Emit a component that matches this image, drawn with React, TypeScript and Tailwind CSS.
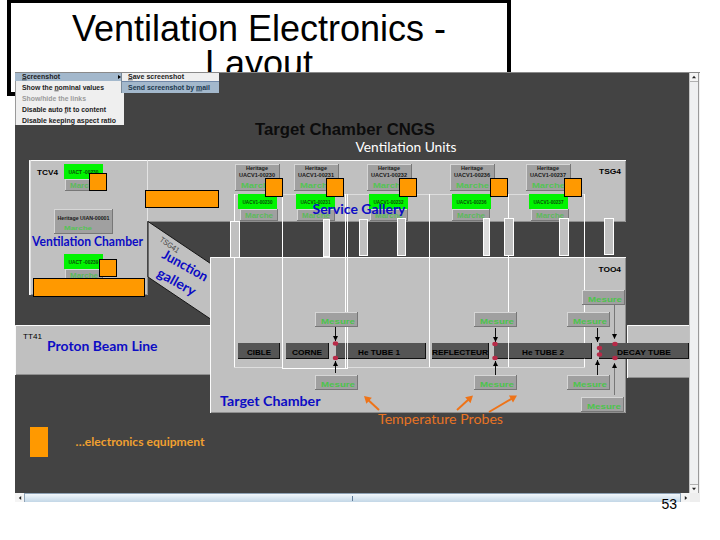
import type { ReactNode } from 'react';
import clsx from 'clsx';

interface Box {
  x: number;
  y: number;
  w: number;
  h: number;
}

interface LabelProps {
  x: number;
  y: number;
  w: number;
  className?: string;
  children: string;
  rotate?: number;
}

const CALIBRI = "font-['Lato','Open_Sans',sans-serif]";
const ARIAL = "font-['Liberation_Sans',Arial,sans-serif]";

const UNITS = [
  { id: 'UACV1-00230', box: 235, fan: 238, base: 240, marker: 265 },
  { id: 'UACV1-00231', box: 294, fan: 296, base: 297, marker: 326 },
  { id: 'UACV1-00232', box: 367, fan: 369, base: 370, marker: 399 },
  { id: 'UACV1-00236', box: 450, fan: 452, base: 452, marker: 490 },
  { id: 'UACV1-00237', box: 526, fan: 529, base: 531, marker: 564 },
];

const DUCTS: Box[] = [
  { x: 230, y: 221, w: 10, h: 37 },
  { x: 323, y: 219, w: 7, h: 38 },
  { x: 359, y: 219, w: 9, h: 37 },
  { x: 397, y: 218, w: 9, h: 38 },
  { x: 483, y: 218, w: 7, h: 38 },
  { x: 504, y: 218, w: 10, h: 38 },
  { x: 559, y: 218, w: 10, h: 38 },
  { x: 604, y: 218, w: 10, h: 37 },
];

const BEAM_PARTS = [
  { name: 'CIBLE', x: 238, w: 42, tx: 247, tw: 24 },
  { name: 'CORNE', x: 286, w: 43, tx: 292, tw: 30 },
  { name: 'He TUBE 1', x: 336, w: 90, tx: 358, tw: 42 },
  { name: 'REFLECTEUR', x: 432, w: 57, tx: 432, tw: 56 },
  { name: 'He TUBE 2', x: 494, w: 98, tx: 522, tw: 42 },
  { name: 'DECAY TUBE', x: 599, w: 90, tx: 617, tw: 54 },
];

const PROBES = [
  [315, 312],
  [315, 375],
  [474, 312],
  [474, 375],
  [567, 312],
  [567, 375],
  [582, 290],
  [581, 397],
];

const SENSORS = [
  [335.5, 343.5],
  [335.5, 358],
  [495, 344],
  [495, 358],
  [599.5, 348],
  [599.5, 354.5],
  [615, 344],
  [615, 358],
];

// x, y of the tail, y of the tip
const PROBE_ARROWS = [
  [335.5, 327, 341],
  [335.5, 373, 361],
  [495.5, 328, 342],
  [495.5, 375, 361],
  [597.5, 328, 342],
  [597.5, 375, 360],
  [614.5, 305, 339],
  [614.5, 395, 363],
];

function Label({ x, y, w, className, children, rotate }: LabelProps) {
  return (
    <text
      x={x}
      y={y}
      textLength={w}
      lengthAdjust="spacingAndGlyphs"
      transform={rotate ? `rotate(${rotate} ${x} ${y})` : undefined}
      className={className}
    >
      {children}
    </text>
  );
}

function Panel({ x, y, w, h }: Box) {
  return (
    <g>
      <rect x={x} y={y} width={w} height={h} className="fill-[#777777]" />
      <rect x={x} y={y} width={w - 1} height={h - 1} className="fill-[#d6d6d6]" />
      <rect x={x + 1} y={y + 1} width={w - 2} height={h - 2} className="fill-[#a0a0a0]" />
    </g>
  );
}

function Room({ x, y, w, h }: Box) {
  return (
    <g>
      <rect x={x} y={y} width={w} height={h} className="fill-[#c0c0c0]" />
      <path d={`M${x + w - 0.5} ${y}V${y + h - 0.5}H${x}`} className="fill-none stroke-[#8e8e8e]" />
      <path d={`M${x + 0.5} ${y + h}V${y + 0.5}H${x + w}`} className="fill-none stroke-[#fafafa]" />
    </g>
  );
}

function Equipment({ x, y, w, h }: Box) {
  return (
    <rect x={x + 0.5} y={y + 0.5} width={w - 1} height={h - 1} className="fill-[#ff9900] stroke-black" />
  );
}

function Fan({ x, y, baseX, baseH, id }: { x: number; y: number; baseX: number; baseH: number; id: string }) {
  return (
    <g>
      <Panel x={baseX} y={y + 15} w={38} h={baseH} />
      <Label x={baseX + 5} y={y + 23.5} w={28} className={`${ARIAL} fill-[#5cba5c] text-[7px] font-bold`}>
        Marche
      </Label>
      <rect x={x} y={y} width={39} height={15} className="fill-[#00f400]" />
      <Label x={x + 4.5} y={y + 9.5} w={30} className={`${ARIAL} fill-[#084c08] text-[6px] font-bold`}>
        {id}
      </Label>
    </g>
  );
}

function HeadedArrow({ x1, y1, x2, y2 }: { x1: number; y1: number; x2: number; y2: number }) {
  const angle = (Math.atan2(y2 - y1, x2 - x1) * 180) / Math.PI;
  const length = Math.hypot(x2 - x1, y2 - y1);
  return (
    <g transform={`translate(${x1} ${y1}) rotate(${angle})`} className="fill-[#ee7318]">
      <rect x={0} y={-1} width={length - 5} height={2} />
      <path d={`M${length} 0L${length - 7} -4V4Z`} />
    </g>
  );
}

function Synoptic() {
  return (
    <svg viewBox="15 73 674 420" className="block h-[420px] w-[674px] shrink-0 bg-[#434343]">
      <Label x={255} y={135} w={180} className={`${ARIAL} fill-[#0c0c0c] text-[17px] font-bold`}>
        Target Chamber CNGS
      </Label>
      <Label x={355.5} y={152} w={101} className={`${CALIBRI} fill-white text-[14px]`}>
        Ventilation Units
      </Label>

      {/* rooms */}
      <Room x={147} y={160} w={479} h={62} />
      <Room x={29} y={160} w={119} h={135} />
      <path d="M30.5 160V295" className="stroke-[#e0e0e0]" />
      <path d="M147.5 160V221" className="stroke-[#e4e4e4]" />
      <path d="M147.5 221V277" className="stroke-[#777777]" />
      <Room x={15} y={325} w={196} h={50} />
      <Room x={627} y={325} w={64} h={53} />
      <path d="M148 221.500L210.500 263.500V319L148 277Z" className="fill-[#c0c0c0] stroke-[#151515]" />
      <Room x={210} y={257} w={416} h={156} />

      {/* ventilation chamber */}
      <Label x={37} y={174.500} w={21} className={`${ARIAL} fill-black text-[8px] font-bold`}>
        TCV4
      </Label>
      <Fan x={64} y={164} baseX={65} baseH={12} id="UACT -00230" />
      <Panel x={54} y={209} w={59} h={25} />
      <Label x={57.5} y={219.500} w={52} className={`${ARIAL} fill-[#181818] text-[6px] font-bold`}>
        Heritage UIAN-00001
      </Label>
      <Label x={64} y={230} w={28} className={`${ARIAL} fill-[#54c454] text-[6px] font-bold`}>
        Marche
      </Label>
      <Fan x={64} y={254} baseX={65} baseH={10} id="UACT -00239" />
      <Equipment x={89} y={173} w={18} h={18} />
      <Equipment x={99} y={259} w={18} h={18} />
      <Equipment x={33} y={278} w={112} h={19} />
      <Equipment x={145} y={190} w={74} h={18} />

      {/* ventilation circuit */}
      <path d="M235 194.500H584" className="stroke-[#dddddd]" />
      {UNITS.map((u) => (
        <g key={u.id}>
          <Panel x={u.box} y={164} w={45} h={27} />
          <Label x={u.box + 11} y={170} w={22} className={`${ARIAL} fill-[#181818] text-[5.5px] font-bold`}>
            Heritage
          </Label>
          <Label x={u.box + 4} y={176.500} w={36} className={`${ARIAL} fill-[#181818] text-[5.5px] font-bold`}>
            {u.id}
          </Label>
          <Label x={u.box + 6} y={187.500} w={33} className={`${ARIAL} fill-[#54c454] text-[7.5px] font-bold`}>
            Marche
          </Label>
          <Fan x={u.fan} y={194} baseX={u.base} baseH={12} id={u.id} />
        </g>
      ))}
      <path
        d="M234.500 194V368M282.500 194V368M345.500 194V368M347.500 194V368M429.500 194V368M508.500 194V368M584.500 194V368"
        className="stroke-white"
      />
      <path d="M234 367.500H282M348 367.500H585" className="stroke-[#dedede]" />
      <path d="M282 368.500H348" className="stroke-white" />
      {UNITS.map((u) => (
        <Equipment key={u.id} x={u.marker} y={178} w={18} h={19} />
      ))}
      {DUCTS.map((d) => (
        <rect
          key={d.x}
          x={d.x + 0.5}
          y={d.y + 0.5}
          width={d.w - 1}
          height={d.h - 1}
          className={clsx('stroke-white', d.w === 7 ? 'fill-[#dcdcdc]' : 'fill-[#c0c0c0]')}
        />
      ))}
      <Label x={599} y={174} w={22} className={`${ARIAL} fill-black text-[8px] font-bold`}>
        TSG4
      </Label>

      {/* beam line */}
      {BEAM_PARTS.map((p) => (
        <g key={p.name}>
          <rect x={p.x} y={343} width={p.w} height={16} className="fill-[#111111]" />
          <rect x={p.x} y={343} width={p.w - 1} height={15} className="fill-[#555555]" />
          <Label x={p.tx} y={354.500} w={p.tw} className={`${ARIAL} fill-black text-[8px] font-bold`}>
            {p.name}
          </Label>
        </g>
      ))}
      <path d="M345.500 343V359M347.500 343V359M508.500 343V359" className="stroke-[#e8e8e8]" />
      <path d="M584.500 343V359" className="stroke-[#555555]" />
      {PROBES.map(([x, y]) => (
        <g key={`${x}-${y}`}>
          <Panel x={x} y={y} w={43} h={15} />
          <Label x={x + 6} y={y + 11.5} w={34} className={`${ARIAL} fill-[#4cc44c] text-[8px] font-bold`}>
            Mesure
          </Label>
        </g>
      ))}
      {PROBE_ARROWS.map(([x, tail, tip]) => {
        const back = tip > tail ? tip - 5 : tip + 5;
        return (
          <g key={`${x}-${tail}`}>
            <path d={`M${x} ${tail}V${tip}`} className={x > 600 ? 'stroke-[#777777]' : 'stroke-[#111111]'} />
            <path d={`M${x} ${tip}L${x - 2.5} ${back}H${x + 2.5}Z`} className="fill-black" />
          </g>
        );
      })}
      {SENSORS.map(([x, y]) => (
        <ellipse key={`${x}-${y}`} cx={x} cy={y} rx={2.7} ry={2.2} className="fill-[#b82a48]" />
      ))}
      <Label x={598.5} y={272} w={22.5} className={`${ARIAL} fill-black text-[8px] font-bold`}>
        TOO4
      </Label>
      <Label x={23} y={339} w={19} className={`${ARIAL} fill-black text-[8px]`}>
        TT41
      </Label>
      <Label x={159} y={241} w={22} rotate={34} className={`${ARIAL} fill-[#444444] text-[8px]`}>
        TSG41
      </Label>

      {/* annotations */}
      <g className={`${CALIBRI} fill-[#0c0cc4] text-[13.5px] font-bold`}>
        <Label x={32} y={246} w={111}>
          Ventilation Chamber
        </Label>
        <Label x={312.5} y={214} w={93}>
          Service Gallery
        </Label>
        <Label x={47} y={351} w={110.5}>
          Proton Beam Line
        </Label>
        <Label x={220} y={406} w={100.5}>
          Target Chamber
        </Label>
        <Label x={161} y={257.5} w={50} rotate={29}>
          Junction
        </Label>
        <Label x={156} y={276} w={42} rotate={29}>
          gallery
        </Label>
      </g>
      <Label x={378} y={424} w={125} className={`${CALIBRI} fill-[#e87424] text-[14px]`}>
        Temperature Probes
      </Label>
      <HeadedArrow x1={379} y1={410} x2={364} y2={396} />
      <HeadedArrow x1={457} y1={410} x2={473} y2={395.5} />
      <HeadedArrow x1={489} y1={412} x2={517} y2={395.5} />
      <rect x={30} y={427} width={18} height={30} className="fill-[#ff9900]" />
      <Label x={75.5} y={446} w={129} className={`${CALIBRI} fill-[#f0a030] text-[11.5px] font-bold`}>
        …electronics equipment
      </Label>
    </svg>
  );
}

function MenuText({ w, children, className }: { w: number; children: ReactNode; className?: string }) {
  return (
    <svg className={clsx('block h-[10px] w-full overflow-visible', className ?? 'fill-[#1c1c1c]')}>
      <text
        x={0}
        y={7.5}
        textLength={w}
        lengthAdjust="spacingAndGlyphs"
        className={`${ARIAL} text-[7px] font-bold`}
      >
        {children}
      </text>
    </svg>
  );
}

function Menus() {
  return (
    <>
      <div className="absolute top-0 left-0 h-[52px] w-[109px] bg-[#efefef] shadow-[inset_1px_0_#9a9a9a]">
        <div className="relative h-2 bg-[#a3b8cc] pl-[7px]">
          <div className="-translate-y-[2px]">
            <MenuText w={38}>
              <tspan className="underline">S</tspan>creenshot
            </MenuText>
          </div>
          <svg viewBox="0 0 3 4" className="absolute top-[2px] right-[3px] h-1 w-[3px]">
            <path d="M0 0L3 2L0 4Z" />
          </svg>
        </div>
        <div className="flex flex-col gap-[1px] pt-[1px] pl-[7px]">
          <MenuText w={82}>
            Show the <tspan className="underline">n</tspan>ominal values
          </MenuText>
          <MenuText w={64} className="fill-[#9a9a9a]">
            Show/hide the links
          </MenuText>
          <MenuText w={84}>
            Disable auto <tspan className="underline">f</tspan>it to content
          </MenuText>
          <MenuText w={94}>
            Disable keeping aspect ratio
          </MenuText>
        </div>
      </div>
      <div className="absolute top-0 left-[106px] h-[20px] w-[98px] border-l border-[#7a8a99] bg-[#efefef]">
        <div className="h-2 pl-[6px]">
          <div className="-translate-y-[2px]">
            <MenuText w={56}>
              <tspan className="underline">S</tspan>ave screenshot
            </MenuText>
          </div>
        </div>
        <div className="h-3 border-t border-[#7088a8] bg-[#a3b8cc] pl-[6px]">
          <MenuText w={82} className="fill-[#20384e]">
            Send screenshot by <tspan className="underline">m</tspan>ail
          </MenuText>
        </div>
      </div>
    </>
  );
}

function ScrollButton({ path, className }: { path: string; className?: string }) {
  return (
    <div className={clsx('flex h-[9px] shrink-0 items-center justify-center bg-[#f4f4f4]', className)}>
      <svg viewBox="0 0 5 5" className="size-[4px] fill-[#222222]">
        <path d={path} />
      </svg>
    </div>
  );
}

function Viewer() {
  return (
    <div className="relative ml-[15px] h-[430px] w-[685px] border-t border-[#8a8a8a] bg-[#f0f0f0]">
      <div className="flex">
        <Synoptic />
        <div className="flex h-[420px] w-[10px] flex-col justify-between border-x border-r-[#9a9a9a] border-l-[#c4c4c4] bg-[#eff0f1]">
          <ScrollButton path="M0 4L2.5 1L5 4Z" className="w-2 border-b border-[#b0b0b0]" />
          <ScrollButton path="M0 1L2.5 4L5 1Z" className="w-2 border-t border-[#b0b0b0]" />
        </div>
      </div>
      <div className="flex h-[9px] w-[685px]">
        <ScrollButton path="M4 0L1 2.500L4 5Z" className="w-[9px]" />
        <div className="flex flex-1 items-center justify-center border-x border-t border-[#8fa3b6] bg-linear-to-b from-[#f2f7fb] to-[#c3d7e7]">
          <div className="h-[5px] w-px bg-[#5f7b98]" />
        </div>
        <ScrollButton path="M1 0L4 2.500L1 5Z" className="w-[9px]" />
        <div className="w-[10px] bg-[#eeeeee]" />
      </div>
      <Menus />
    </div>
  );
}

export default function App() {
  return (
    <div className={`flex h-[540px] w-[720px] flex-col overflow-hidden bg-white text-black ${ARIAL}`}>
      <header className="ml-[7px] h-24 w-[504px] shrink-0 border-4 border-t-[3px] border-black px-12 pt-[8px] text-center text-[36px] leading-[35px]">
        <h1>Ventilation Electronics - Layout</h1>
      </header>
      <main className="z-10 -mt-6">
        <Viewer />
      </main>
      <footer className="z-20 -mt-[6px] pr-[43px] text-right text-[14px] leading-4">53</footer>
    </div>
  );
}
